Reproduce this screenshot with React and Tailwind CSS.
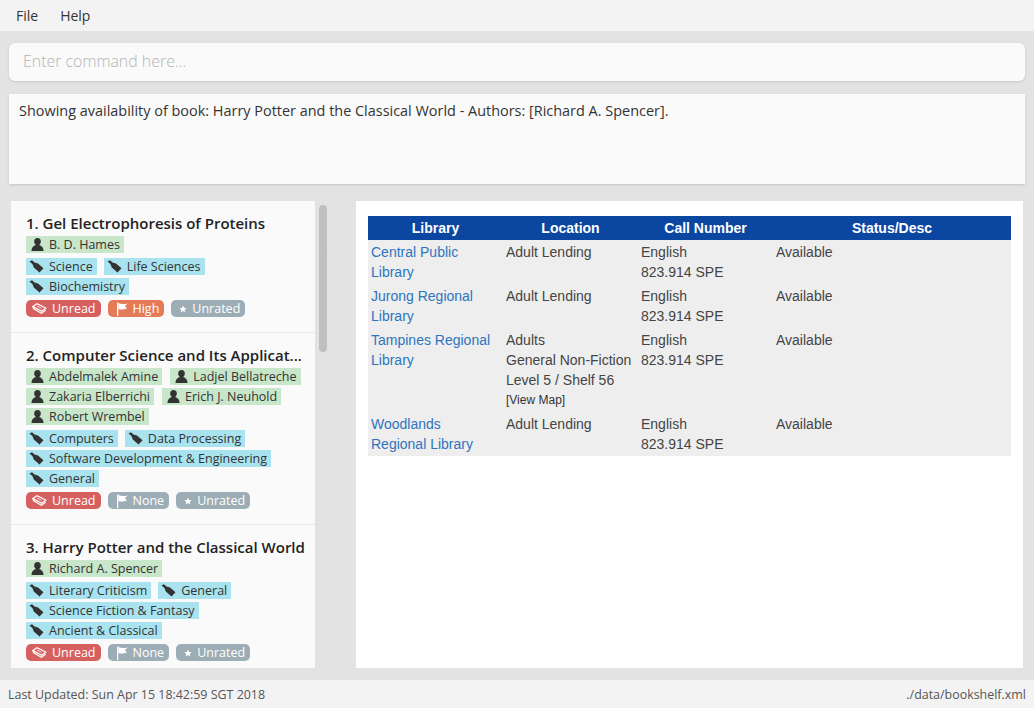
const books = [
  {
    title: '1. Gel Electrophoresis of Proteins',
    authors: [['B. D. Hames']],
    cats: [['Science', 'Life Sciences'], ['Biochemistry']],
    priority: 'High',
  },
  {
    title: '2. Computer Science and Its Applicat...',
    authors: [['Abdelmalek Amine', 'Ladjel Bellatreche'], ['Zakaria Elberrichi', 'Erich J. Neuhold'], ['Robert Wrembel']],
    cats: [['Computers', 'Data Processing'], ['Software Development & Engineering'], ['General']],
    priority: 'None',
  },
  {
    title: '3. Harry Potter and the Classical World',
    authors: [['Richard A. Spencer']],
    cats: [['Literary Criticism', 'General'], ['Science Fiction & Fantasy'], ['Ancient & Classical']],
    priority: 'None',
  },
]

const rows = [
  { lib: ['Central Public', 'Library'], loc: ['Adult Lending'] },
  { lib: ['Jurong Regional', 'Library'], loc: ['Adult Lending'] },
  { lib: ['Tampines Regional', 'Library'], loc: ['Adults', 'General Non-Fiction', 'Level 5 / Shelf 56'], map: true },
  { lib: ['Woodlands', 'Regional Library'], loc: ['Adult Lending'] },
]

function PersonIcon() {
  return (
    <svg width="13" height="13" viewBox="0 0 13 13" className="shrink-0 fill-[#333]">
      <ellipse cx="6.5" cy="3.6" rx="3.3" ry="3.6" />
      <path d="M0.5 13 C0.5 9.4 2.5 8 4.6 7 L8.4 7 C10.5 8 12.5 9.4 12.5 13 Z" />
    </svg>
  )
}

function TagIcon() {
  return (
    <svg width="15" height="13" viewBox="0 0 15 13" className="shrink-0 fill-[#333]">
      <path d="M0.5 1.5 L3 0.2 L5.5 2.4 L9 3.6 L14.5 8.2 L10.5 12.6 L4.8 7.4 L3.4 4 Z" />
    </svg>
  )
}

function BookIcon() {
  return (
    <svg width="15" height="11" viewBox="0 0 15 11" fill="none" stroke="#fff" strokeWidth="1.2" className="shrink-0">
      <path d="M1 3.6 L5 0.8 L13.8 5 L9.6 8.2 Z" />
      <path d="M1 3.6 L1.4 5.6 L9.4 10.2 L13.8 7" />
      <path d="M5 3 L9.6 5.4" strokeWidth="0.8" />
    </svg>
  )
}

function FlagIcon() {
  return (
    <svg width="12" height="14" viewBox="0 0 12 14" className="shrink-0 fill-white">
      <path d="M1 0.5 H2.3 V14 H1 Z" />
      <path d="M2.3 1 C5 2.2 8 2.4 11.5 1.4 L9 4.2 L11 6.6 C7.5 7.8 5 7.8 2.3 7 Z" />
    </svg>
  )
}

function StarIcon() {
  return (
    <svg width="8" height="8" viewBox="0 0 10 10" className="shrink-0 fill-white">
      <path d="M5 0.5 L6.3 3.6 L9.6 3.9 L7.1 6 L7.9 9.4 L5 7.6 L2.1 9.4 L2.9 6 L0.4 3.9 L3.7 3.6 Z" />
    </svg>
  )
}

function Tag({ color, icon, text, left }) {
  return (
    <span className={`flex h-[17px] items-center gap-[5px] pr-1 text-[12.5px] leading-[17px] whitespace-nowrap text-[#333] ${left} ${color}`}>
      {icon}
      {text}
    </span>
  )
}

function Pill({ color, icon, text, left }) {
  return (
    <span className={`flex h-[17px] items-center gap-[5px] rounded-[5px] pr-[5px] text-[12.5px] leading-[17px] whitespace-nowrap text-white ${left} ${color}`}>
      {icon}
      {text}
    </span>
  )
}

function BookCard({ book, last }) {
  return (
    <div className={`px-[15px] pt-3 pb-[15px] ${last ? '' : 'border-b border-[#e6e6e6]'}`}>
      <div className="mb-[3px] whitespace-nowrap text-[15px] leading-5 font-semibold text-[#222]">{book.title}</div>
      <div className="flex flex-col gap-[3px]">
        {book.authors.map((line, i) => (
          <div key={i} className="flex gap-2">
            {line.map((a) => (
              <Tag key={a} color="bg-[#c8e6c9]" left="pl-[5px]" icon={<PersonIcon />} text={a} />
            ))}
          </div>
        ))}
      </div>
      <div className="mt-[5px] flex flex-col gap-[3px]">
        {book.cats.map((line, i) => (
          <div key={i} className="flex gap-[7px]">
            {line.map((c) => (
              <Tag key={c} color="bg-[#a9e3ef]" left="pl-[3px]" icon={<TagIcon />} text={c} />
            ))}
          </div>
        ))}
      </div>
      <div className="mt-[5px] flex gap-[7px]">
        <Pill color="bg-[#d66060]" left="pl-[6px]" icon={<BookIcon />} text="Unread" />
        <Pill color={book.priority === 'High' ? 'bg-[#e57a56]' : 'bg-[#9dadb6]'} left="pl-2" icon={<FlagIcon />} text={book.priority} />
        <Pill color="bg-[#9dadb6]" left="pl-[8px]" icon={<StarIcon />} text="Unrated" />
      </div>
    </div>
  )
}

export default function App() {
  return (
    <div className="flex h-[708px] w-[1034px] flex-col overflow-hidden bg-[#e3e3e3] font-['Open_Sans',sans-serif] text-[#333]">
      <div className="flex h-[31px] items-center gap-[22px] bg-[#f3f3f3] pl-4 text-sm">
        <span>File</span>
        <span>Help</span>
      </div>

      <div className="mx-[9px] mt-3 flex h-[38px] items-center rounded-[6px] bg-[#fafafa] pl-[14px] text-[15.9px] font-light text-[#b4b4b4] shadow-sm">
        Enter command here...
      </div>

      <div className="mx-[9px] mt-[13px] h-[90px] bg-[#fafafa] px-[10px] pt-[7px] text-[14.45px] leading-5 shadow-sm">
        Showing availability of book: Harry Potter and the Classical World - Authors: [Richard A. Spencer].
      </div>

      <div className="mt-[17px] flex h-[467px] px-[11px]">
        <div className="flex w-[324px] bg-linear-to-r from-[#d6d6d6] to-[#e3e3e3]">
          <div className="w-[304px] overflow-hidden bg-[#fafafa]">
            {books.map((b, i) => (
              <BookCard key={b.title} book={b} last={i === 2} />
            ))}
          </div>
          <div className="flex-1 pt-1 pl-1">
            <div className="h-[147px] w-2 rounded-full bg-[#bfbfbf]" />
          </div>
        </div>

        <div className="ml-[21px] w-[667px] bg-white pt-[15px] pl-3 font-['Liberation_Sans',sans-serif] text-sm leading-5 text-[#444]">
          <table className="w-[643px] table-fixed border-collapse">
            <thead>
              <tr className="h-6 bg-[#0b47a1] font-bold text-white">
                <th className="w-[135px] text-center">Library</th>
                <th className="w-[135px] text-center">Location</th>
                <th className="w-[135px] text-center">Call Number</th>
                <th className="text-center">Status/Desc</th>
              </tr>
            </thead>
            <tbody>
              {rows.map((r) => (
                <tr key={r.lib[0]} className="bg-[#eeeeee] align-top">
                  <td className="px-[3px] py-[2px] whitespace-nowrap text-[#2f74bd]">
                    {r.lib.map((l) => (
                      <div key={l}>{l}</div>
                    ))}
                  </td>
                  <td className="px-[3px] py-[2px] whitespace-nowrap">
                    {r.loc.map((l) => (
                      <div key={l}>{l}</div>
                    ))}
                    {r.map && <div className="text-xs leading-5 text-[#333]">[View Map]</div>}
                  </td>
                  <td className="px-[3px] py-[2px]">
                    <div>English</div>
                    <div>823.914 SPE</div>
                  </td>
                  <td className="px-[3px] py-[2px]">Available</td>
                </tr>
              ))}
            </tbody>
          </table>
        </div>
      </div>

      <div className="mt-3 flex h-[28px] items-center justify-between bg-[#f3f3f3] px-2 pt-[2px] text-[12.45px] text-[#555]">
        <span>Last Updated: Sun Apr 15 18:42:59 SGT 2018</span>
        <span>./data/bookshelf.xml</span>
      </div>
    </div>
  )
}
